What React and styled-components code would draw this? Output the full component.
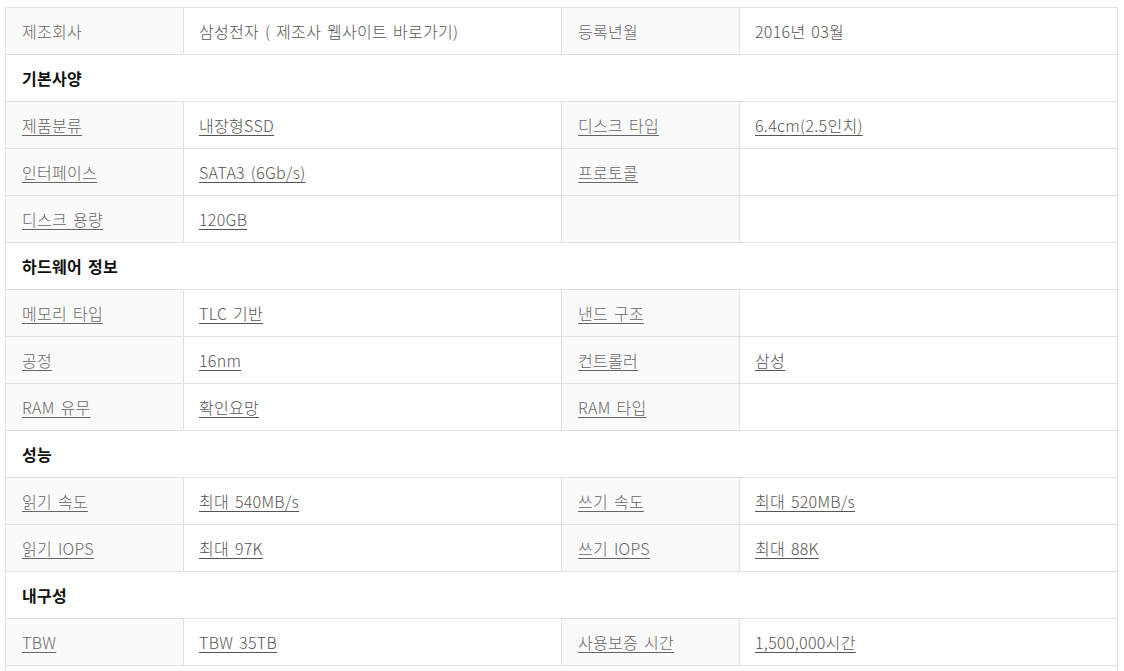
import React from "react";
import styled, { createGlobalStyle } from "styled-components";

const GlobalStyle = createGlobalStyle`
  body {
    margin: 0;
    background: #fff;
    font-family: "Noto Sans CJK KR", "Noto Sans", sans-serif;
  }
`;

const Wrapper = styled.div`
  padding: 7px 0 0 5px;
  width: 1112px;
`;

const SpecTable = styled.table`
  width: 1112px;
  table-layout: fixed;
  border-collapse: collapse;
  border-spacing: 0;
  font-size: 16px;
  letter-spacing: 0.3px;
  word-spacing: 2px;
`;

const Row = styled.tr`
  height: 47px;
`;

const Cell = styled.td`
  border: 1px solid #e1e1e1;
  padding: 0 16px 0 ${(p) => (p.$label ? 16 : 15)}px;
  vertical-align: middle;
  color: ${(p) => (p.$label ? "#666" : "#555")};
  background: ${(p) => (p.$label ? "#fafafa" : "#fff")};
  font-weight: 300;
  white-space: nowrap;
  overflow: hidden;
`;

const Heading = styled.th`
  border: 1px solid #e1e1e1;
  padding: 0 16px;
  text-align: left;
  font-weight: 700;
  color: #111;
  background: #fff;
`;

const Link = styled.span`
  text-decoration: underline;
  text-underline-offset: 3px;
`;

const sections = [
  {
    title: "기본사양",
    rows: [
      ["제품분류", "내장형SSD", "디스크 타입", "6.4cm(2.5인치)"],
      ["인터페이스", "SATA3 (6Gb/s)", "프로토콜", ""],
      ["디스크 용량", "120GB", "", ""],
    ],
  },
  {
    title: "하드웨어 정보",
    rows: [
      ["메모리 타입", "TLC 기반", "낸드 구조", ""],
      ["공정", "16nm", "컨트롤러", "삼성"],
      ["RAM 유무", "확인요망", "RAM 타입", ""],
    ],
  },
  {
    title: "성능",
    rows: [
      ["읽기 속도", "최대 540MB/s", "쓰기 속도", "최대 520MB/s"],
      ["읽기 IOPS", "최대 97K", "쓰기 IOPS", "최대 88K"],
    ],
  },
  {
    title: "내구성",
    rows: [["TBW", "TBW 35TB", "사용보증 시간", "1,500,000시간"]],
  },
];

function SpecRow({ cells }) {
  return (
    <Row>
      {cells.map((text, i) => (
        <Cell key={i} $label={i % 2 === 0}>
          {text && <Link>{text}</Link>}
        </Cell>
      ))}
    </Row>
  );
}

export default function App() {
  return (
    <>
      <GlobalStyle />
      <Wrapper>
        <SpecTable>
          <colgroup>
            <col style={{ width: 178 }} />
            <col style={{ width: 378 }} />
            <col style={{ width: 178 }} />
            <col style={{ width: 378 }} />
          </colgroup>
          <tbody>
            <Row>
              <Cell $label>제조회사</Cell>
              <Cell>삼성전자 ( 제조사 웹사이트 바로가기)</Cell>
              <Cell $label>등록년월</Cell>
              <Cell>2016년 03월</Cell>
            </Row>
            {sections.map((s) => (
              <React.Fragment key={s.title}>
                <Row>
                  <Heading colSpan={4}>{s.title}</Heading>
                </Row>
                {s.rows.map((r, i) => (
                  <SpecRow key={i} cells={r} />
                ))}
              </React.Fragment>
            ))}
            <Row>
              <Heading colSpan={4}></Heading>
            </Row>
          </tbody>
        </SpecTable>
      </Wrapper>
    </>
  );
}
